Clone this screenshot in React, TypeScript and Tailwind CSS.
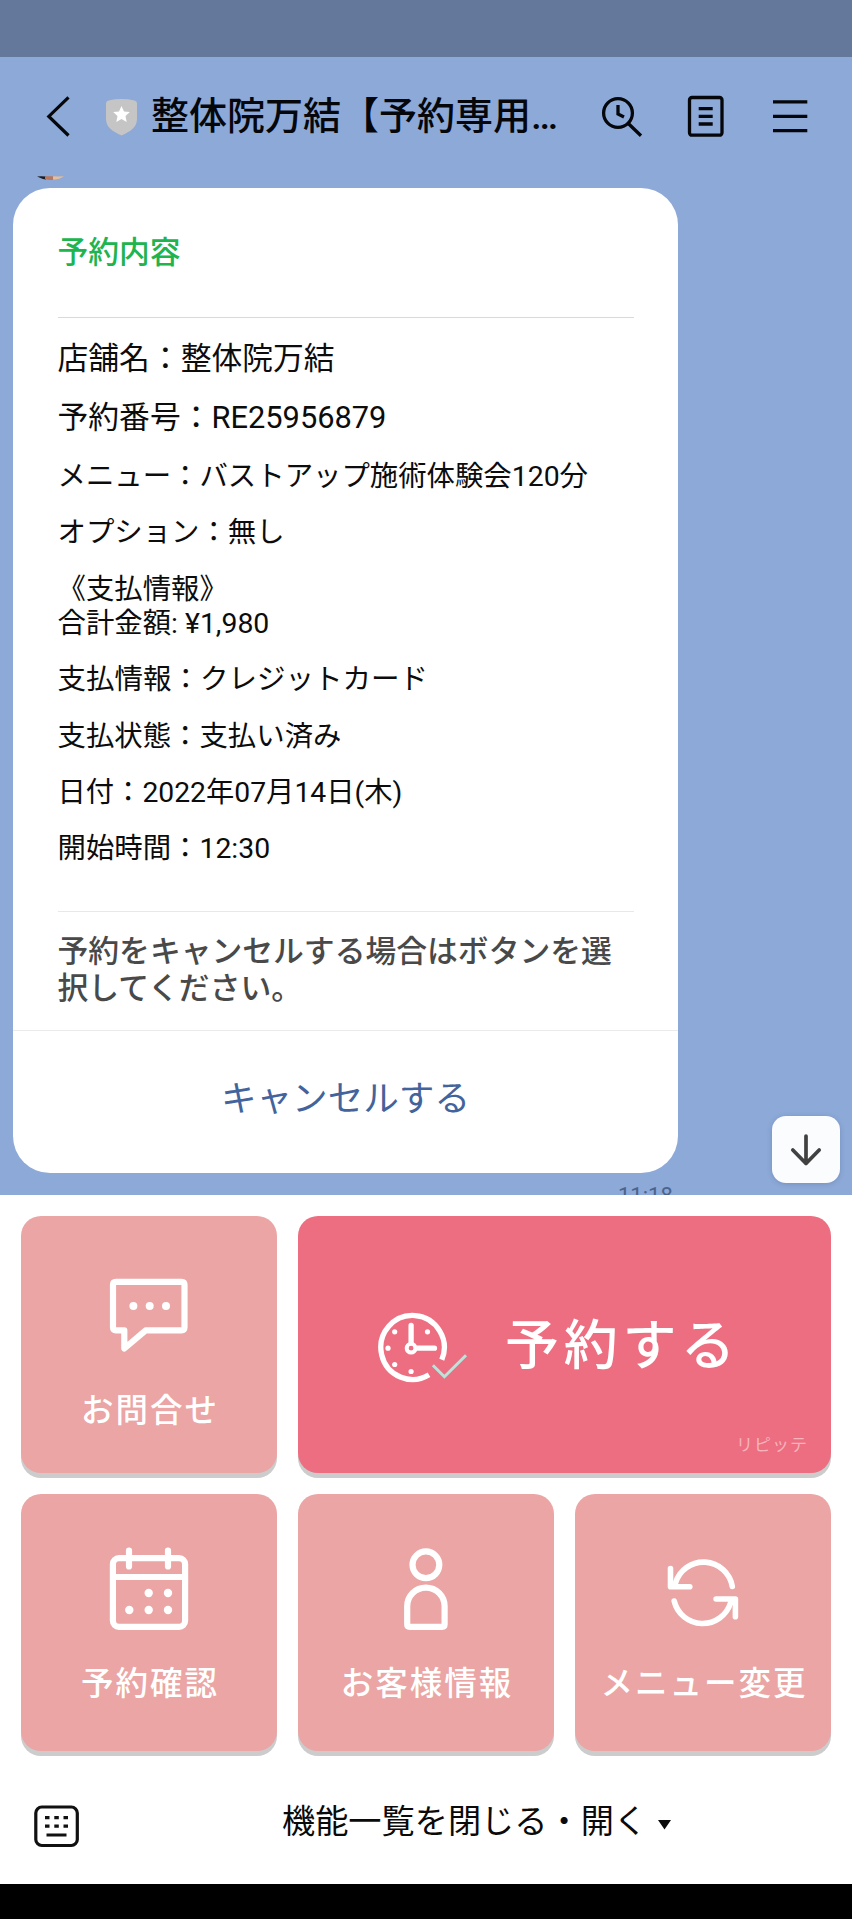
import type { ReactNode } from "react";

const details = [
  { text: "店舗名：整体院万結", cls: "h-[60px] text-[30.8px]" },
  { text: "予約番号：RE25956879", cls: "h-[59px] text-[30.8px]" },
  { text: "メニュー：バストアップ施術体験会120分", cls: "h-[58px] text-[28.4px]" },
  { text: "オプション：無し", cls: "h-[55px] text-[28.4px]" },
  { text: "《支払情報》", cls: "mt-3 h-[34px] text-[28.4px]" },
  { text: "合計金額: ¥1,980", cls: "mb-[11px] h-[34px] text-[28.4px]" },
  { text: "支払情報：クレジットカード", cls: "h-[57px] text-[28.5px]" },
  { text: "支払状態：支払い済み", cls: "h-[56px] text-[28.4px]" },
  { text: "日付：2022年07月14日(木)", cls: "h-[56px] text-[28.3px]" },
  { text: "開始時間：12:30", cls: "h-[57px] text-[28.4px]" },
];

function Header() {
  return (
    <header className="flex h-[119px] items-center pb-[2px]">
      <svg className="ml-[40px] h-12 w-9 shrink-0" viewBox="40 92 36 48" fill="none" stroke="#05070b" strokeWidth="3.200">
        <path d="M68.500 97.300 48.800 116.400l19.700 19.100" />
      </svg>
      <svg className="ml-[28px] h-12 w-[34px] shrink-0" viewBox="104 92 34 48">
        <path d="M106 103.500q0-2.400 2.500-3 13-2.800 26 0 2.500.6 2.500 3v15.500c0 8-6.500 12.500-15.500 16.500-9-4-15.500-8.500-15.500-16.500z" fill="#c5c5c5" />
        <path d="M121.500 106l2.500 5.400 5.800.7-4.300 4 1.200 5.900-5.200-2.900-5.200 2.900 1.200-5.900-4.300-4 5.800-.7z" fill="#fff" />
      </svg>
      <h1 className="ml-[13px] w-[449px] shrink-0 whitespace-nowrap text-[38px] font-medium leading-[48px] text-[#05070b]">
        整体院万結【予約専用<span className="font-['Roboto']">…</span>
      </h1>
      <svg className="h-12 w-12 shrink-0" viewBox="600 92 48 48" fill="none" stroke="#05070b" strokeWidth="3.300">
        <circle cx="618" cy="113" r="14.400" />
        <path d="M628.300 123.500 641 135.800M618 105v9l6 3" />
      </svg>
      <svg className="ml-[34px] h-12 w-12 shrink-0" viewBox="682 92 48 48" fill="none" stroke="#05070b" strokeWidth="3.300">
        <rect x="689.500" y="97.500" width="32.500" height="37.700" rx="2.500" />
        <path d="M698.700 108.700h14M698.700 116.300h14M698.700 124h14" />
      </svg>
      <svg className="ml-[36px] h-12 w-12 shrink-0" viewBox="766 92 48 48" fill="none" stroke="#05070b" strokeWidth="3.300">
        <path d="M773 101.900h34.300M773 116.300h34.300M773 130.700h34.300" />
      </svg>
    </header>
  );
}

function ReservationCard() {
  return (
    <section className="ml-[13px] flex h-[985px] w-[665px] flex-col rounded-[37px] bg-white">
      <div className="mx-[44.500px] flex flex-col">
        <h2 className="mt-[42px] flex h-[46px] items-center text-[30.750px] font-medium leading-none text-[#20b44f]">予約内容</h2>
        <hr className="mt-[41px] mb-[11px] border-0 border-t border-[#d9d9d9]" />
        {details.map((d) => (
          <p key={d.text} className={`flex items-center whitespace-nowrap leading-none text-[#0c0c0c] ${d.cls}`}>
            {d.text}
          </p>
        ))}
        <hr className="mt-[33px] h-px border-0 bg-[#e8e8e8]" />
        <p className="mt-[21px] w-[570px] text-[30.800px] font-medium leading-[37px] text-[#494949]">
          予約をキャンセルする場合はボタンを選
          <br />
          択してください。
        </p>
      </div>
      <button className="mt-[23px] h-[142px] border-t border-[#ebebeb] pb-[3px] text-[35.600px] leading-none text-[#43639c]">
        キャンセルする
      </button>
    </section>
  );
}

function Tile({ label, box, labelClass, children }: { label: string; box: string; labelClass: string; children: ReactNode }) {
  return (
    <button className="flex h-[257px] flex-col items-center rounded-[20px] bg-[#eaa5a4] shadow-[0_5px_0_#cccccc]">
      <svg className="h-[150px] w-[256px]" viewBox={box} fill="none" stroke="#fff" strokeWidth="6.200" strokeLinecap="round" strokeLinejoin="round">
        {children}
      </svg>
      <span className={`whitespace-nowrap pl-[2px] text-[32.500px] font-medium leading-[42px] tracking-[2px] text-white ${labelClass}`}>{label}</span>
    </button>
  );
}

function RichMenu() {
  return (
    <section className="grid h-[561px] grid-cols-[256px_256px_256px] content-start gap-[21px] bg-white pl-[21px] pt-[21px]">
      <Tile label="お問合せ" box="21 1216 256 150" labelClass="mt-[24px]">
        <path d="M116 1281.800h65.500q3 0 3 3v42.500q0 3-3 3h-35.800l-21.400 18.200v-18.200H116q-3 0-3-3v-42.500q0-3 3-3z" />
        <g fill="#fff" stroke="none">
          <circle cx="133.400" cy="1306" r="4" />
          <circle cx="149.700" cy="1306" r="4" />
          <circle cx="166" cy="1306" r="4" />
        </g>
      </Tile>
      <button className="relative col-span-2 flex h-[257px] items-center rounded-[20px] bg-[#ec6e80] shadow-[0_5px_0_#cccccc]">
        <svg className="ml-[75px] h-[80px] w-[100px]" viewBox="373.500 1304.500 100 80" fill="none" stroke="#fff" strokeWidth="5.300" strokeLinecap="butt">
          <path d="M442.300 1359.300A31.700 32 0 1 0 429.500 1374.300" />
          <path d="M411.600 1325v16M418 1347.700h17" strokeLinecap="round" />
          <circle cx="411.600" cy="1347.700" r="4.400" strokeWidth="4" />
          <g fill="#fff" stroke="none">
            <circle cx="395.200" cy="1331.300" r="2.600" />
            <circle cx="428" cy="1331.300" r="2.600" />
            <circle cx="388.500" cy="1347.700" r="2.600" />
            <circle cx="395.200" cy="1364" r="2.600" />
            <circle cx="411.600" cy="1371" r="2.600" />
          </g>
          <path d="M433.400 1364.800 444.900 1376.200 466.500 1354.700" stroke="#b5e5dc" strokeWidth="3" />
        </svg>
        <span className="ml-[32px] mt-[5px] whitespace-nowrap text-[54px] font-medium leading-none tracking-[4.700px] text-white">予約する</span>
        <span className="absolute bottom-[18px] right-[23px] text-[17px] leading-5 tracking-[1px] text-[#f6b3bb]">リピッテ</span>
      </button>
      <Tile label="予約確認" box="21 1494 256 150" labelClass="mt-[19px]">
        <rect x="112.900" y="1558.200" width="72.200" height="68.600" rx="6" />
        <path d="M113 1577h72M129 1550.500v16M168 1550.500v16" />
        <g fill="#fff" stroke="none">
          <circle cx="148.700" cy="1593" r="4.200" />
          <circle cx="168" cy="1593" r="4.200" />
          <circle cx="129.300" cy="1610" r="4.200" />
          <circle cx="148.700" cy="1610" r="4.200" />
          <circle cx="168" cy="1610" r="4.200" />
        </g>
      </Tile>
      <Tile label="お客様情報" box="298 1494 256 150" labelClass="mt-[19px]">
        <circle cx="425.900" cy="1564.800" r="13.400" />
        <path d="M407.200 1606.200a18.700 18.700 0 0 1 37.400 0v18.100q0 2.500-2.500 2.500h-32.400q-2.500 0-2.500-2.500z" />
      </Tile>
      <Tile label="メニュー変更" box="575 1494 256 150" labelClass="mt-[19px]">
        <g strokeWidth="5.600">
          <path d="M732.300 1586.500A29.200 29.200 0 0 0 675.500 1583" />
          <path d="M730.500 1603A29.200 29.200 0 0 1 674.200 1601" />
          <path d="M670.500 1568.500v18.200h19.300M735.400 1616.700V1599h-19.300" />
        </g>
        <path d="M671 1587v-6h4.500v6zM735 1599v6h-4.500v-6z" fill="#fff" stroke="none" />
      </Tile>
    </section>
  );
}

export default function App() {
  return (
    <main className="flex h-[1919px] w-[852px] flex-col overflow-hidden bg-[#8ca9d8] font-['Roboto','Noto_Sans_CJK_JP',sans-serif]">
      <div className="h-[57px] shrink-0 bg-[#63789a]" />
      <div className="relative h-[1138px] shrink-0 overflow-hidden">
        <Header />
        <svg className="ml-[36px] h-3 w-7" viewBox="36 176 28 12">
          <path d="M37 176.500q4-.5 9 0v3q-4-.5-9-3z" fill="#1d1c22" />
          <path d="M45 176.300h9v3.500q-5 .8-9-.8z" fill="#b9785e" />
          <path d="M53 176.300q5 .2 11 0-4 3-11 3.500z" fill="#e7bd98" />
        </svg>
        <ReservationCard />
        <time className="ml-[618px] mt-[10px] block text-[22px] leading-[26px] text-[#4b638b]">11:18</time>
        <button className="absolute left-[772px] top-[1059px] flex h-[67px] w-[68px] items-center justify-center rounded-[14px] bg-[#fbfcfe] shadow-[0_1px_5px_rgba(50,70,110,0.25)]">
          <svg className="h-10 w-10" viewBox="785.700 1129 40 40" fill="none" stroke="#414141" strokeWidth="3.700" strokeLinecap="round" strokeLinejoin="round">
            <path d="M805.700 1135v27.500M792.500 1149l13.200 13.500 13.200-13.500" />
          </svg>
        </button>
      </div>
      <RichMenu />
      <footer className="flex h-[128px] shrink-0 items-center bg-white pt-[4px]">
        <svg className="ml-[32px] mt-2 h-12 w-12 shrink-0" viewBox="32 1802 48 48" fill="none" stroke="#111" strokeWidth="3.200">
          <rect x="35.800" y="1807" width="41.500" height="38.500" rx="6" />
          <path d="M45 1817.700h4.500M54.300 1817.700h4.500M63.500 1817.700h4.500M45 1826.200h4.500M54.300 1826.200h4.500M63.500 1826.200h4.500M46.500 1835h20" />
        </svg>
        <span className="ml-[202px] whitespace-nowrap text-[33.200px] leading-none text-[#0a0a0a]">機能一覧を閉じる・開く</span>
        <svg className="ml-[11px] mt-[5px] h-[10px] w-[13px]" viewBox="0 0 13 10">
          <path d="M0 0h13L6.500 9.500z" fill="#0a0a0a" />
        </svg>
      </footer>
      <div className="flex-1 bg-black" />
    </main>
  );
}
